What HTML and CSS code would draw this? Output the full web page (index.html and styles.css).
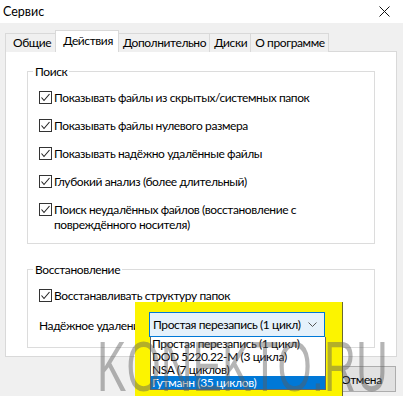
FILE: index.html
```html
<!DOCTYPE html>
<html lang="ru">
<head>
    <meta charset="UTF-8">
    <meta name="viewport" content="width=device-width, initial-scale=1.0">
    <title>Сервис</title>
    <link rel="stylesheet" href="styles.css">
</head>
<body>
    <div class="titlebar">
        <span class="title">Сервис</span>
        <svg class="close" width="11" height="11" viewBox="0 0 11 11">
            <path d="M0.5 0.5 L10.5 10.5 M10.5 0.5 L0.5 10.5" stroke="#111" stroke-width="1" fill="none"/>
        </svg>
    </div>

    <div class="tabs">
        <div class="tab">Общие</div>
        <div class="tab active">Действия</div>
        <div class="tab">Дополнительно</div>
        <div class="tab">Диски</div>
        <div class="tab">О программе</div>
    </div>

    <div class="panel">
        <fieldset class="group search">
            <legend>Поиск</legend>
            <label class="check">
                <span class="box"><svg viewBox="0 0 11 11"><path d="M1.5 5.5 L4 8.5 L9.5 2"/></svg></span>
                <span>Показывать файлы из скрытых/системных папок</span>
            </label>
            <label class="check">
                <span class="box"><svg viewBox="0 0 11 11"><path d="M1.5 5.5 L4 8.5 L9.5 2"/></svg></span>
                <span>Показывать файлы нулевого размера</span>
            </label>
            <label class="check">
                <span class="box"><svg viewBox="0 0 11 11"><path d="M1.5 5.5 L4 8.5 L9.5 2"/></svg></span>
                <span>Показывать надёжно удалённые файлы</span>
            </label>
            <label class="check">
                <span class="box"><svg viewBox="0 0 11 11"><path d="M1.5 5.5 L4 8.5 L9.5 2"/></svg></span>
                <span>Глубокий анализ (более длительный)</span>
            </label>
            <label class="check">
                <span class="box"><svg viewBox="0 0 11 11"><path d="M1.5 5.5 L4 8.5 L9.5 2"/></svg></span>
                <span>Поиск неудалённых файлов (восстановление с<br>повреждённого носителя)</span>
            </label>
        </fieldset>

        <fieldset class="group restore">
            <legend>Восстановление</legend>
            <label class="check">
                <span class="box"><svg viewBox="0 0 11 11"><path d="M1.5 5.5 L4 8.5 L9.5 2"/></svg></span>
                <span>Восстанавливать структуру папок</span>
            </label>
            <div class="wipe-row">Надёжное удаление:</div>
        </fieldset>
    </div>

    <div class="footer">
        <button class="btn">Отмена</button>
    </div>

    <!-- yellow marker over the wipe method dropdown -->
    <div class="marker">
        <div class="combo">
            <span>Простая перезапись (1 цикл)</span>
            <svg width="9" height="6" viewBox="0 0 9 6"><path d="M0.5 0.5 L4.5 4.5 L8.5 0.5" stroke="#555" fill="none"/></svg>
        </div>
        <ul class="options">
            <li>Простая перезапись (1 цикл)</li>
            <li>DOD 5220.22-M (3 цикла)</li>
            <li>NSA (7 циклов)</li>
            <li class="selected">Гутманн (35 циклов)</li>
        </ul>
    </div>

    <div class="watermark">KONEKTO.RU</div>
</body>
</html>
```

FILE: styles.css
```css
body {
    margin: 0;
    width: 403px;
    height: 396px;
    overflow: hidden;
    position: relative;
    background-color: #f0f0f0;
    font-family: Lato, Roboto, Arial, sans-serif;
    font-size: 12px;
    letter-spacing: -0.4px;
    color: #000;
}

.titlebar {
    height: 23px;
    background: white;
    display: flex;
    align-items: center;
    justify-content: space-between;
    padding: 0 13px 0 3px;
    font-size: 12.5px;
    letter-spacing: 0;
}

.close {
    display: block;
}

/* tab strip */
.tabs {
    display: flex;
    align-items: flex-end;
    height: 29px;
    padding-left: 5px;
}

.tab {
    height: 18px;
    line-height: 18px;
    padding: 0 3px 0 4px;
    border: 1px solid #d9d9d9;
    border-bottom: none;
    margin-right: -1px;
    background: #f0f0f0;
}

.tab:first-child {
    padding: 0 6px 0 7px;
}

.tab.active {
    position: relative;
    z-index: 1;
    height: 21px;
    line-height: 20px;
    padding: 0 5px 0 7px;
    margin: 0 -1px 0 -2px;
    background: white;
}

.panel {
    height: 292px;
    margin: -1px 6px 0 5px;
    padding: 12px 21px 0 21px;
    background: white;
    border: 1px solid #d9d9d9;
}

/* group boxes */
.group {
    box-sizing: border-box;
    margin: 0;
    border: 1px solid #dcdcdc;
    padding: 11px 0 0 11px;
}

.group legend {
    line-height: 15px;
    padding: 0 2px;
    margin-left: -6px;
}

.search {
    height: 180px;
}

.restore {
    margin-top: 18px;
    height: 86px;
}

.check {
    display: flex;
    align-items: flex-start;
    line-height: 15px;
    margin-bottom: 13px;
}

.box {
    width: 11px;
    height: 11px;
    border: 1px solid #333;
    margin: 1px 2px 0 0;
    flex: none;
}

.box svg {
    display: block;
    width: 11px;
    height: 11px;
    stroke: #222;
    stroke-width: 1.1;
    fill: none;
}

.restore .check {
    margin-bottom: 15px;
}

.wipe-row {
    line-height: 15px;
}

/* bottom buttons */
.footer {
    display: flex;
    justify-content: flex-end;
    padding: 9px 7px 0 0;
}

.btn {
    width: 62px;
    height: 26px;
    font: inherit;
    letter-spacing: inherit;
    text-align: left;
    padding: 0 0 0 6px;
    background: #e1e1e1;
    border: 1px solid #adadad;
}

/* yellow highlight overlay */
.marker {
    position: absolute;
    left: 135px;
    top: 302px;
    width: 193px;
    height: 100px;
    padding: 10px 0 0 14px;
    background: #fcf400;
    border-right: 1px solid #6b6a30;
}

.combo {
    box-sizing: border-box;
    width: 176px;
    height: 25px;
    display: flex;
    align-items: center;
    justify-content: space-between;
    padding: 0 7px 0 3px;
    background: #e5f1fb;
    border: 1px solid #0078d7;
    white-space: nowrap;
}

.options {
    list-style: none;
    margin: 0 0 0 1px;
    padding: 0;
    width: 174px;
    background: white;
    border: 1px solid #646464;
    border-top: none;
    white-space: nowrap;
}

.options li {
    line-height: 13px;
    padding-left: 1px;
}

.options .selected {
    background: #0078d7;
    color: white;
}

.watermark {
    position: absolute;
    left: 97px;
    top: 332px;
    font-family: "Liberation Sans", Arial, sans-serif;
    font-size: 70px;
    line-height: 70px;
    letter-spacing: 0;
    color: rgba(90, 90, 90, 0.45);
    transform: scaleX(0.63);
    transform-origin: left top;
    white-space: nowrap;
    pointer-events: none;
}
```
